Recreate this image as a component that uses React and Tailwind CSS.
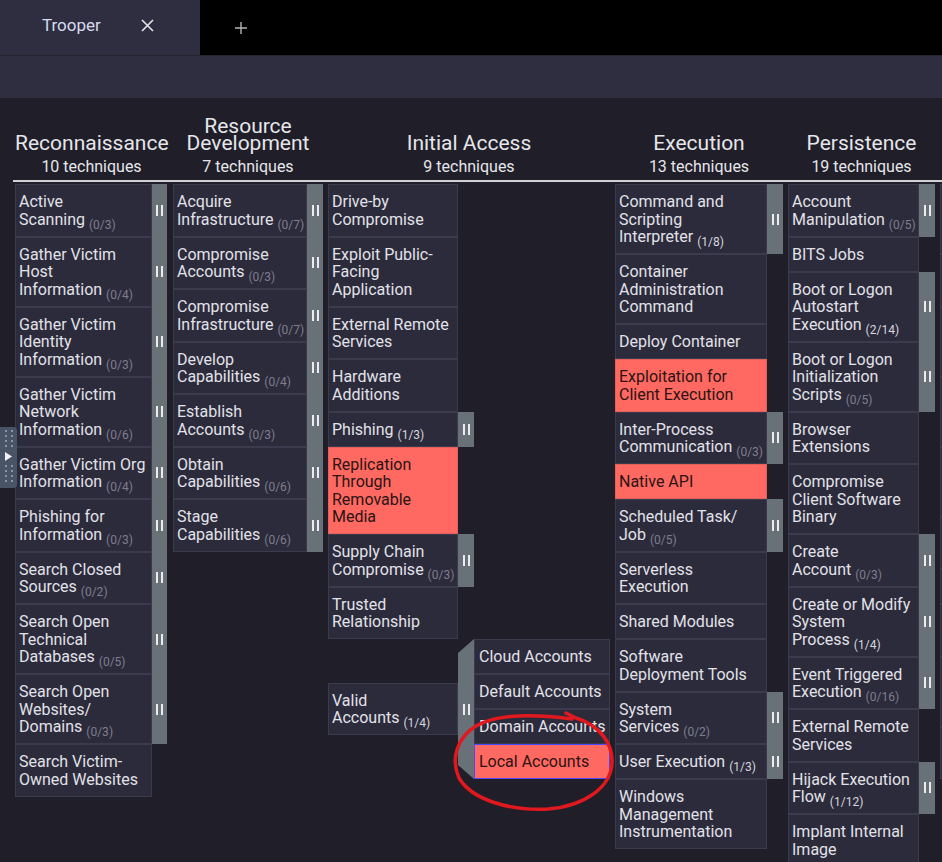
import React from "react";

const C1 = [
  { t: ["Active", "Scanning"], s: "0/3" },
  { t: ["Gather Victim", "Host", "Information"], s: "0/4" },
  { t: ["Gather Victim", "Identity", "Information"], s: "0/3" },
  { t: ["Gather Victim", "Network", "Information"], s: "0/6" },
  { t: ["Gather Victim Org", "Information"], s: "0/4" },
  { t: ["Phishing for", "Information"], s: "0/3" },
  { t: ["Search Closed", "Sources"], s: "0/2" },
  { t: ["Search Open", "Technical", "Databases"], s: "0/5" },
  { t: ["Search Open", "Websites/", "Domains"], s: "0/3" },
  { t: ["Search Victim-", "Owned Websites"] },
];

const C2 = [
  { t: ["Acquire", "Infrastructure"], s: "0/7" },
  { t: ["Compromise", "Accounts"], s: "0/3" },
  { t: ["Compromise", "Infrastructure"], s: "0/7" },
  { t: ["Develop", "Capabilities"], s: "0/4" },
  { t: ["Establish", "Accounts"], s: "0/3" },
  { t: ["Obtain", "Capabilities"], s: "0/6" },
  { t: ["Stage", "Capabilities"], s: "0/6" },
];

const C3 = [
  { t: ["Drive-by", "Compromise"] },
  { t: ["Exploit Public-", "Facing", "Application"] },
  { t: ["External Remote", "Services"] },
  { t: ["Hardware", "Additions"] },
  { t: ["Phishing"], s: "1/3" },
  { t: ["Replication", "Through", "Removable", "Media"], red: true },
  { t: ["Supply Chain", "Compromise"], s: "0/3" },
  { t: ["Trusted", "Relationship"] },
];

const C4 = [
  { t: ["Command and", "Scripting", "Interpreter"], s: "1/8" },
  { t: ["Container", "Administration", "Command"] },
  { t: ["Deploy Container"] },
  { t: ["Exploitation for", "Client Execution"], red: true },
  { t: ["Inter-Process", "Communication"], s: "0/3" },
  { t: ["Native API"], red: true },
  { t: ["Scheduled Task/", "Job"], s: "0/5" },
  { t: ["Serverless", "Execution"] },
  { t: ["Shared Modules"] },
  { t: ["Software", "Deployment Tools"] },
  { t: ["System", "Services"], s: "0/2" },
  { t: ["User Execution"], s: "1/3" },
  { t: ["Windows", "Management", "Instrumentation"] },
];

const C5 = [
  { t: ["Account", "Manipulation"], s: "0/5" },
  { t: ["BITS Jobs"] },
  { t: ["Boot or Logon", "Autostart", "Execution"], s: "2/14" },
  { t: ["Boot or Logon", "Initialization", "Scripts"], s: "0/5" },
  { t: ["Browser", "Extensions"] },
  { t: ["Compromise", "Client Software", "Binary"] },
  { t: ["Create", "Account"], s: "0/3" },
  { t: ["Create or Modify", "System", "Process"], s: "1/4" },
  { t: ["Event Triggered", "Execution"], s: "0/16" },
  { t: ["External Remote", "Services"] },
  { t: ["Hijack Execution", "Flow"], s: "1/12" },
  { t: ["Implant Internal", "Image"] },
];

const C6 = [
  { t: ["Abuse Elevation", "Control", "Mechanism"], s: "0/4" },
  { t: ["Access Token", "Manipulation"], s: "0/5" },
  { t: ["Boot or Logon", "Autostart", "Execution"], s: "2/14" },
  { t: ["Boot or Logon", "Initialization", "Scripts"], s: "0/5" },
  { t: ["Create or Modify", "System", "Process"], s: "1/4" },
  { t: ["Domain Policy", "Modification"], s: "0/2" },
  { t: ["Escape to Host"] },
  { t: ["Event Triggered", "Execution"], s: "0/16" },
  { t: ["Exploitation for", "Privilege", "Escalation"] },
  { t: ["Hijack Execution", "Flow"], s: "1/12" },
];

function Sub({ v }) {
  const zero = v.startsWith("0");
  return (
    <span
      className={
        zero
          ? "relative top-[4px] text-[12px] leading-none text-[#7f7e8c]"
          : "relative top-[4px] text-[12px] leading-none text-[#d6d6dc]"
      }
    >
      ({v})
    </span>
  );
}

function Label({ t, s }) {
  return t.map((l, i) => (
    <React.Fragment key={i}>
      {i > 0 && <br />}
      {l}
      {i === t.length - 1 && s && (
        <>
          {" "}
          <Sub v={s} />
        </>
      )}
    </React.Fragment>
  ));
}

function Bars() {
  return (
    <div className="flex gap-[3px]">
      <div className="w-[2px] h-[11px] bg-[#ececf0]" />
      <div className="w-[2px] h-[11px] bg-[#ececf0]" />
    </div>
  );
}

function Cell({ item, w }) {
  const cls = item.red
    ? "bg-[#ff6961] text-[#2a1414] border-[#e4605a]"
    : "bg-[#2c2b3c] text-[#e2e2e8] border-[#3c3b4e]";
  return (
    <div
      className={`${w} ${cls} border pl-[3px] pr-[2px] pt-[8px] pb-[7.5px] text-[16px] leading-[17.5px] whitespace-nowrap`}
    >
      <Label t={item.t} s={item.s} />
    </div>
  );
}

function Column({ items, cw, sw }) {
  return (
    <div className="flex flex-col">
      {items.map((it, i) => (
        <div key={i} className="flex">
          <Cell item={it} w={cw} />
          {it.s && (
            <div className={`${sw} bg-[#687078] flex items-center justify-center`}>
              <Bars />
            </div>
          )}
        </div>
      ))}
    </div>
  );
}

function SubCell({ label, selected }) {
  return (
    <div
      className={
        selected
          ? "bg-[#ff6961] text-[#2a1414] border border-[#4a4aff] pl-[4px] pt-[8px] pb-[7.5px] text-[16px] leading-[17.5px] whitespace-nowrap"
          : "bg-[#2c2b3c] text-[#e2e2e8] border border-[#3c3b4e] pl-[4px] pt-[8px] pb-[7.5px] text-[16px] leading-[17.5px] whitespace-nowrap"
      }
    >
      {label}
    </div>
  );
}

function Header({ w, title, n }) {
  return (
    <div className={`${w} shrink-0 text-center text-[#e6e6ea]`}>
      <div className="text-[21px] leading-[17px]">{title}</div>
      <div className="text-[16px] leading-[20px] mt-[5px]">{n} techniques</div>
    </div>
  );
}

function DotRow() {
  return (
    <div className="flex gap-[4px]">
      <div className="w-[2px] h-[2px] bg-[#8894aa]" />
      <div className="w-[2px] h-[2px] bg-[#8894aa]" />
    </div>
  );
}

export default function App() {
  return (
    <div className="relative w-[942px] h-[862px] overflow-hidden bg-[#1f1e29] font-['Roboto',sans-serif]">
      {/* tab bar */}
      <div className="flex h-[55px] bg-black">
        <div className="w-[200px] bg-[#2f2e41] flex items-center pl-[42px] pb-[4px]">
          <span className="text-[17px] text-[#d6dbef]">Trooper</span>
          <svg className="ml-[40px]" width="13" height="13" viewBox="0 0 13 13">
            <path d="M1 1 L12 12 M12 1 L1 12" stroke="#e6e6ea" strokeWidth="1.6" />
          </svg>
        </div>
        <div className="w-[82px] flex items-center justify-center">
          <svg width="12" height="12" viewBox="0 0 12 12">
            <path d="M6 0 V12 M0 6 H12" stroke="#b4b4ba" strokeWidth="1.4" />
          </svg>
        </div>
      </div>
      <div className="h-[43px] bg-[#2f2e41] border-t border-[#25242f]" />

      {/* matrix */}
      <div className="pl-[13px]">
        <div className="flex items-end gap-[5px] pl-[2px] h-[84px] border-b-2 border-[#cfcfd4] pb-[3px]">
          <Header w="w-[153px]" title="Reconnaissance" n="10" />
          <Header
            w="w-[150px]"
            title={
              <>
                Resource
                <br />
                Development
              </>
            }
            n="7"
          />
          <Header w="w-[282px]" title="Initial Access" n="9" />
          <Header w="w-[168px]" title="Execution" n="13" />
          <Header w="w-[147px]" title="Persistence" n="19" />
          <Header
            w="w-[160px]"
            title={
              <>
                Privilege
                <br />
                Escalation
              </>
            }
            n="13"
          />
        </div>

        <div className="flex items-start gap-[5px] pl-[2px] pt-[2px]">
          <div className="w-[153px] shrink-0">
            <Column items={C1} cw="w-[137px]" sw="w-[15px]" />
          </div>
          <div className="w-[150px] shrink-0">
            <Column items={C2} cw="w-[134px]" sw="w-[16px]" />
          </div>
          <div className="w-[282px] shrink-0 flex flex-col">
            <Column items={C3} cw="w-[130px]" sw="w-[16px]" />
            <div className="flex">
              <div className="w-[130px] flex items-center">
                <Cell item={{ t: ["Valid", "Accounts"], s: "1/4" }} w="w-[130px]" />
              </div>
              <div className="w-[16px] bg-[#687078] [clip-path:polygon(0_10%,100%_0,100%_100%,0_90%)] flex items-center justify-center">
                <Bars />
              </div>
              <div className="w-[136px] flex flex-col">
                <SubCell label="Cloud Accounts" />
                <SubCell label="Default Accounts" />
                <SubCell label="Domain Accounts" />
                <SubCell label="Local Accounts" selected />
              </div>
            </div>
          </div>
          <div className="w-[168px] shrink-0">
            <Column items={C4} cw="w-[152px]" sw="w-[16px]" />
          </div>
          <div className="w-[147px] shrink-0">
            <Column items={C5} cw="w-[131px]" sw="w-[16px]" />
          </div>
          <div className="w-[160px] shrink-0">
            <Column items={C6} cw="w-[144px]" sw="w-[16px]" />
          </div>
        </div>
      </div>

      {/* left side handle */}
      <div className="absolute left-0 top-[427px] w-[17px] h-[61px] bg-[#4a5467] rounded-r-[4px] flex flex-col items-center pt-[3px]">
        <div className="flex flex-col gap-[3px] pl-[1px]">
          <DotRow />
          <DotRow />
          <DotRow />
          <DotRow />
        </div>
        <svg className="mt-[5px]" width="7" height="9" viewBox="0 0 7 9">
          <path d="M0 0 L7 4.5 L0 9 Z" fill="#f2f2f4" />
        </svg>
        <div className="flex flex-col gap-[3px] pl-[1px] mt-[4px]">
          <DotRow />
          <DotRow />
          <DotRow />
          <DotRow />
        </div>
      </div>

      {/* hand-drawn annotation */}
      <svg
        className="absolute left-0 top-0 pointer-events-none"
        width="942"
        height="862"
        viewBox="0 0 942 862"
      >
        <path
          d="M566 713 L576 718 C599 725 613 743 612 763 C611 787 585 806 548 809 C510 811 472 800 459 778 C450 758 458 737 476 726 C497 714 535 714 572 719"
          fill="none"
          stroke="#e1191e"
          strokeWidth="3.5"
          strokeLinecap="round"
          strokeLinejoin="round"
        />
      </svg>
    </div>
  );
}
